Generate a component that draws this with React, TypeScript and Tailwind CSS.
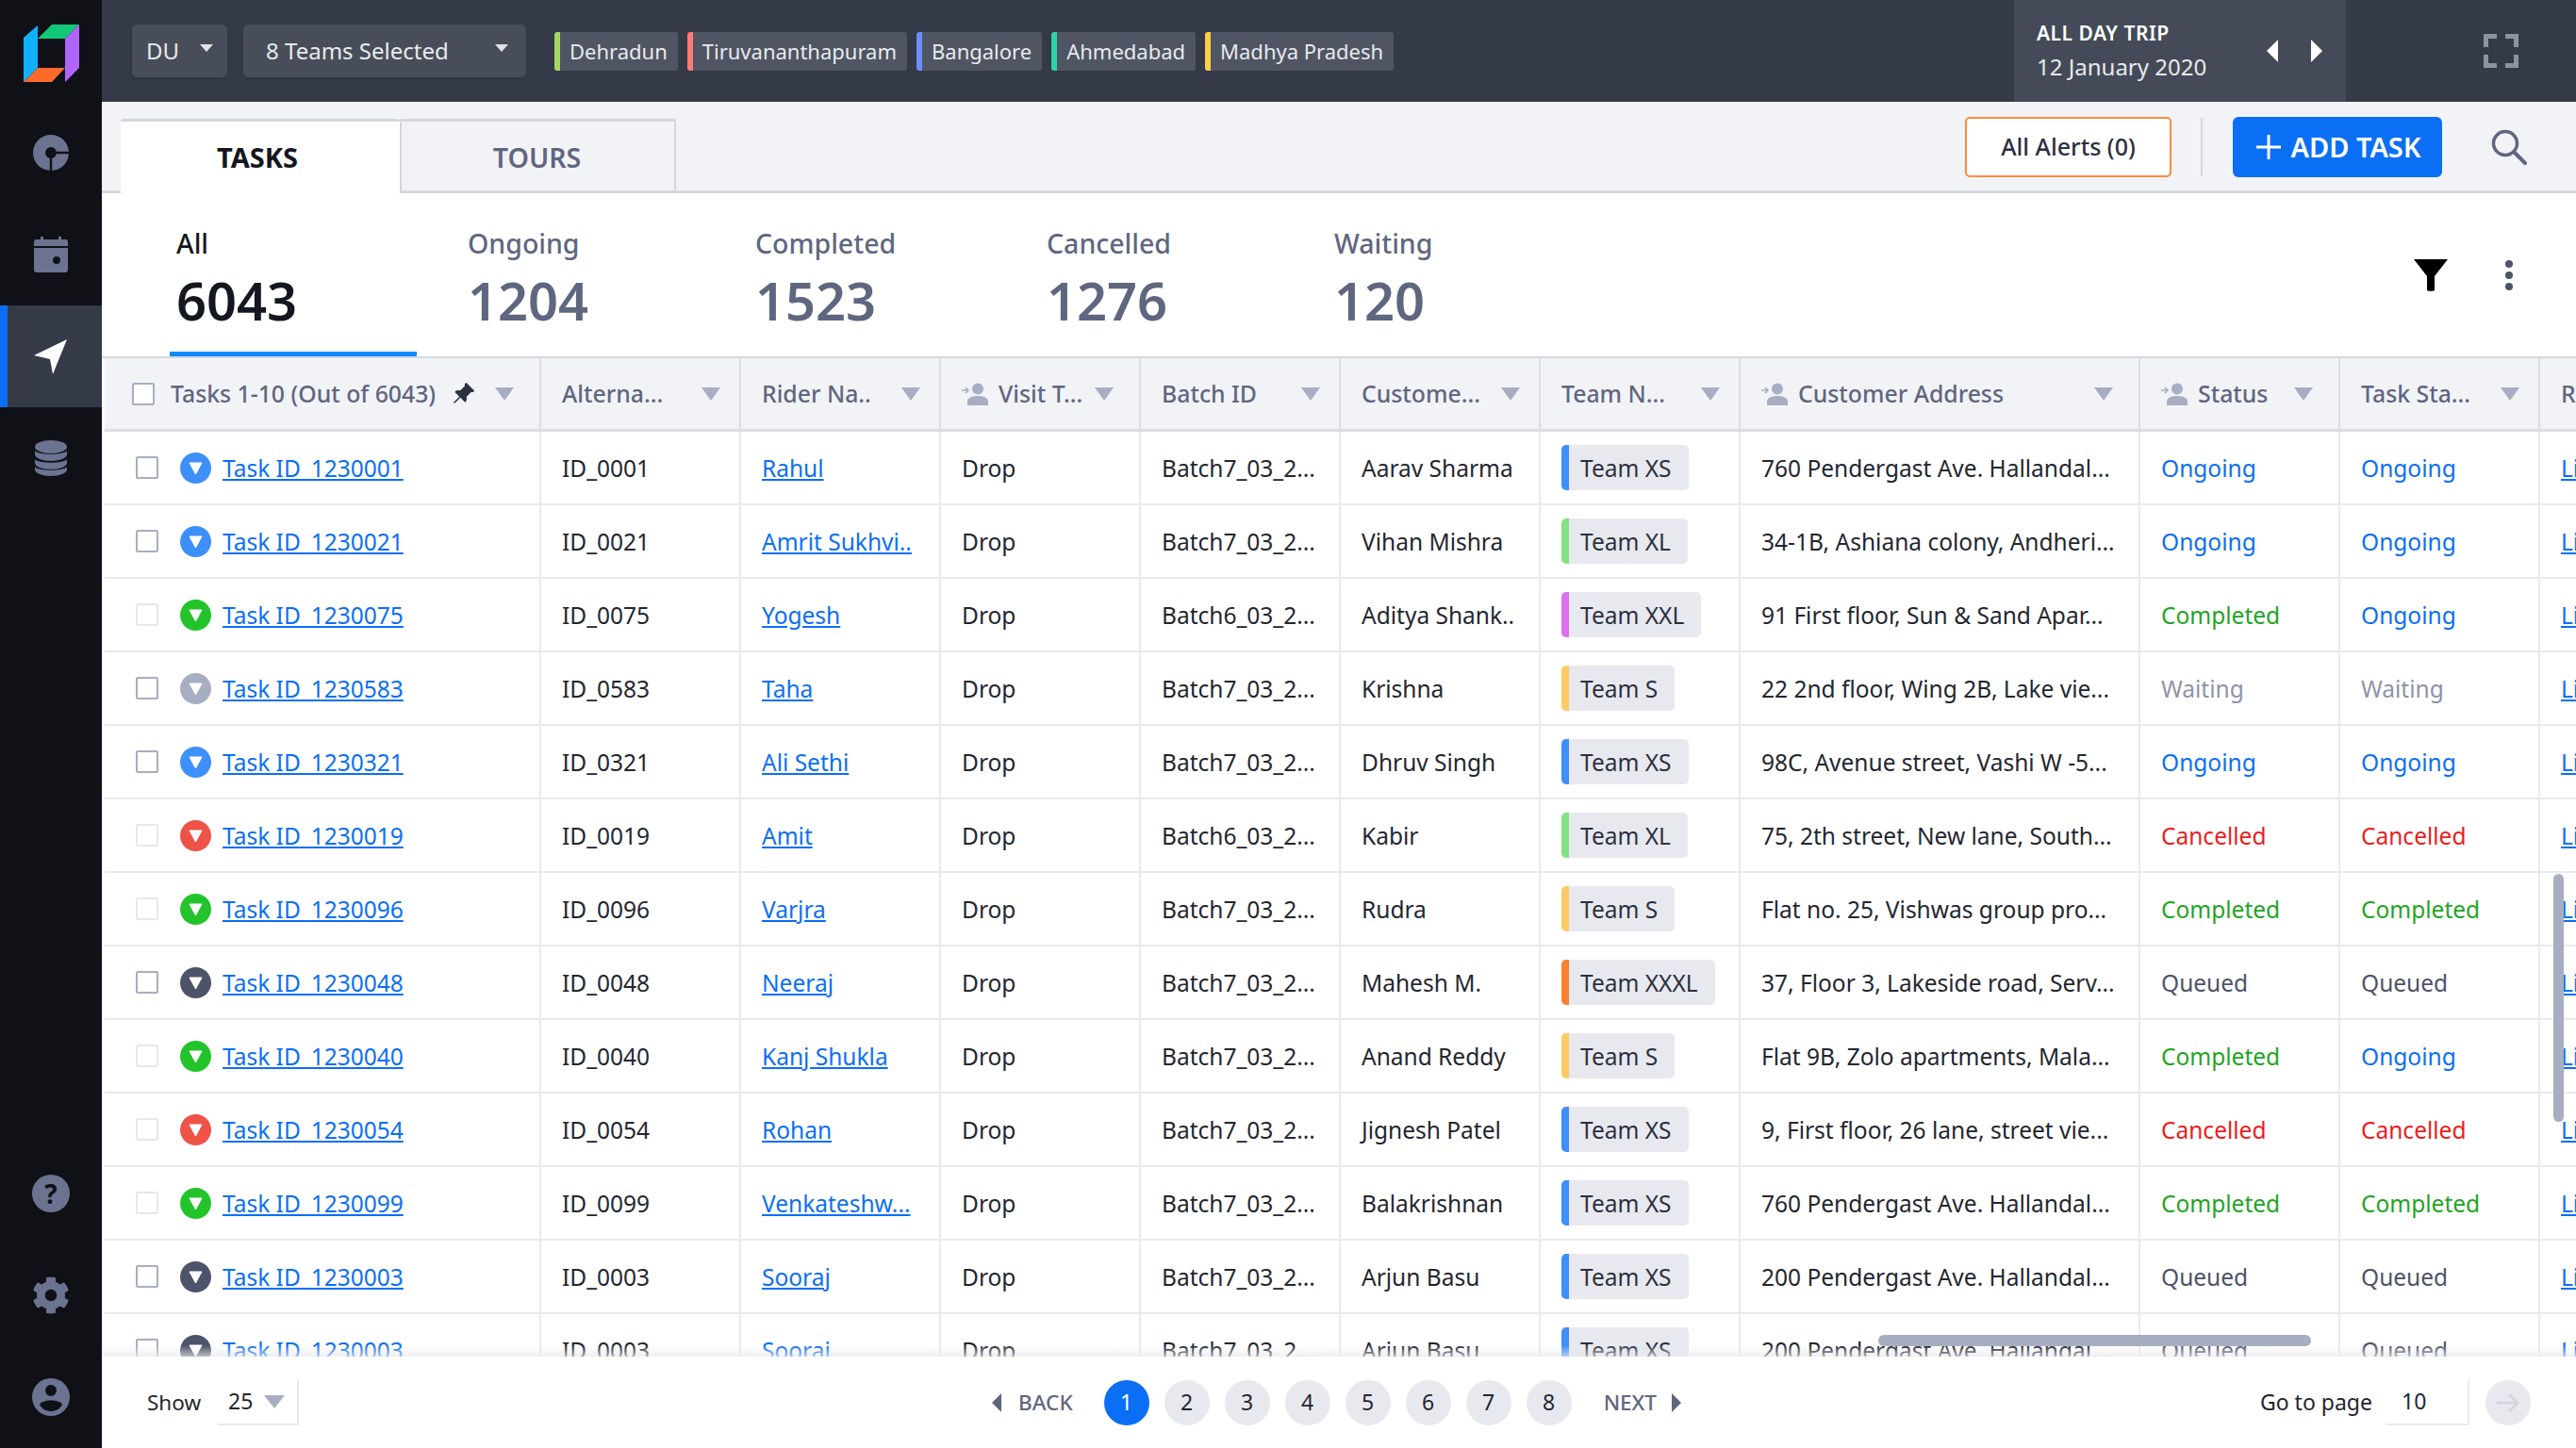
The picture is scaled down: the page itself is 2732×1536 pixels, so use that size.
import { ReactNode } from "react";
import { BsPinAngleFill } from "react-icons/bs";
import { FaCog } from "react-icons/fa";

type Team = "XS" | "XL" | "XXL" | "XXXL" | "S";
type Status = "Ongoing" | "Completed" | "Waiting" | "Cancelled" | "Queued";

interface Row {
  id: string;
  alt: string;
  rider: string;
  batch: string;
  customer: string;
  team: Team;
  address: string;
  status: Status;
  taskStatus: Status;
  faint?: boolean;
}

const rows: Row[] = [
  { id: "1230001", alt: "ID_0001", rider: "Rahul", batch: "Batch7_03_2...", customer: "Aarav Sharma", team: "XS", address: "760 Pendergast Ave. Hallandal...", status: "Ongoing", taskStatus: "Ongoing" },
  { id: "1230021", alt: "ID_0021", rider: "Amrit Sukhvi..", batch: "Batch7_03_2...", customer: "Vihan Mishra", team: "XL", address: "34-1B, Ashiana colony, Andheri...", status: "Ongoing", taskStatus: "Ongoing" },
  { id: "1230075", alt: "ID_0075", rider: "Yogesh", batch: "Batch6_03_2...", customer: "Aditya Shank..", team: "XXL", address: "91 First floor, Sun & Sand Apar...", status: "Completed", taskStatus: "Ongoing", faint: true },
  { id: "1230583", alt: "ID_0583", rider: "Taha", batch: "Batch7_03_2...", customer: "Krishna", team: "S", address: "22 2nd floor, Wing 2B, Lake vie...", status: "Waiting", taskStatus: "Waiting" },
  { id: "1230321", alt: "ID_0321", rider: "Ali Sethi", batch: "Batch7_03_2...", customer: "Dhruv Singh", team: "XS", address: "98C, Avenue street, Vashi W -5...", status: "Ongoing", taskStatus: "Ongoing" },
  { id: "1230019", alt: "ID_0019", rider: "Amit", batch: "Batch6_03_2...", customer: "Kabir", team: "XL", address: "75, 2th street, New lane, South...", status: "Cancelled", taskStatus: "Cancelled", faint: true },
  { id: "1230096", alt: "ID_0096", rider: "Varjra", batch: "Batch7_03_2...", customer: "Rudra", team: "S", address: "Flat no. 25, Vishwas group pro...", status: "Completed", taskStatus: "Completed", faint: true },
  { id: "1230048", alt: "ID_0048", rider: "Neeraj", batch: "Batch7_03_2...", customer: "Mahesh M.", team: "XXXL", address: "37, Floor 3, Lakeside road, Serv...", status: "Queued", taskStatus: "Queued" },
  { id: "1230040", alt: "ID_0040", rider: "Kanj Shukla", batch: "Batch7_03_2...", customer: "Anand Reddy", team: "S", address: "Flat 9B, Zolo apartments, Mala...", status: "Completed", taskStatus: "Ongoing", faint: true },
  { id: "1230054", alt: "ID_0054", rider: "Rohan", batch: "Batch7_03_2...", customer: "Jignesh Patel", team: "XS", address: "9, First floor, 26 lane, street vie...", status: "Cancelled", taskStatus: "Cancelled", faint: true },
  { id: "1230099", alt: "ID_0099", rider: "Venkateshw...", batch: "Batch7_03_2...", customer: "Balakrishnan", team: "XS", address: "760 Pendergast Ave. Hallandal...", status: "Completed", taskStatus: "Completed", faint: true },
  { id: "1230003", alt: "ID_0003", rider: "Sooraj", batch: "Batch7_03_2...", customer: "Arjun Basu", team: "XS", address: "200 Pendergast Ave. Hallandal...", status: "Queued", taskStatus: "Queued" },
  { id: "1230003", alt: "ID_0003", rider: "Sooraj", batch: "Batch7_03_2...", customer: "Arjun Basu", team: "XS", address: "200 Pendergast Ave. Hallandal...", status: "Queued", taskStatus: "Queued" },
];

const teamStrip: Record<Team, string> = {
  XS: "border-[#3d8ffb]",
  XL: "border-[#80e283]",
  XXL: "border-[#df6ff0]",
  XXXL: "border-[#ff7f2e]",
  S: "border-[#ffc965]",
};

const statusText: Record<Status, string> = {
  Ongoing: "text-[#0b6ff5]",
  Completed: "text-[#1fa51f]",
  Waiting: "text-[#8d93a8]",
  Cancelled: "text-[#ee1c1c]",
  Queued: "text-[#4d5368]",
};

const statusDot: Record<Status, string> = {
  Ongoing: "bg-[#3d8ffb]",
  Completed: "bg-[#22c42a]",
  Waiting: "bg-[#a8aec2]",
  Cancelled: "bg-[#ef5247]",
  Queued: "bg-[#4d5368]",
};

const cols = {
  first: "w-[463px] shrink-0",
  normal: "w-[212px] shrink-0",
  wide: "w-[424px] shrink-0",
};

const chips = [
  ["Dehradun", "border-[#a5d75f]"],
  ["Tiruvananthapuram", "border-[#ff7b73]"],
  ["Bangalore", "border-[#6f8cff]"],
  ["Ahmedabad", "border-[#2dd4a7]"],
  ["Madhya Pradesh", "border-[#ffce45]"],
];

function Caret({ className = "text-[#a8aec2]", w = 20, h = 14 }: { className?: string; w?: number; h?: number }) {
  return (
    <svg width={w} height={h} viewBox="0 0 20 14" preserveAspectRatio="none" className={`shrink-0 ${className}`}>
      <path d="M0 0H20L10 14Z" fill="currentColor" />
    </svg>
  );
}

function Side({ children, active }: { children: ReactNode; active?: boolean }) {
  return (
    <div className={`flex h-[108px] items-center justify-center ${active ? "border-l-[8px] border-[#0b6ff5] bg-[#343a48] pr-[8px]" : ""}`}>
      {children}
    </div>
  );
}

function Logo() {
  return (
    <svg width="108" height="108" viewBox="0 0 108 108">
      <path d="M25 40L40 27V72L25 87Z" fill="#12b0fb" />
      <path d="M40 41L55 26H84L69 41Z" fill="#12c878" />
      <path d="M69 41L84 26V72L69 87Z" fill="#b065ff" />
      <path d="M40 72H69L55 87H25Z" fill="#ff6a2b" />
    </svg>
  );
}

function Person() {
  return (
    <svg width="30" height="24" viewBox="0 0 30 24" className="shrink-0 text-[#a8aec2]">
      <circle cx="17" cy="6.5" r="6" fill="currentColor" />
      <path d="M6 24V20C6 16 11 14 17 14S28 16 28 20V24Z" fill="currentColor" />
      <path d="M0 8H6M4 5L7 8L4 11" stroke="currentColor" strokeWidth="1.5" fill="none" />
    </svg>
  );
}

function HeadCell({ label, col, person }: { label: string; col: string; person?: boolean }) {
  return (
    <div className={`${col} flex h-full items-center border-r-2 border-[#dcdee6] pl-[22px] ${person ? "pr-[27px]" : "pr-[20px]"}`}>
      {person ? <Person /> : null}
      <span className={`flex-1 text-[24.800px] font-medium text-[#5f6680] ${person ? "ml-[9px]" : ""}`}>{label}</span>
      <Caret />
    </div>
  );
}

function Check({ faint }: { faint?: boolean }) {
  return <span className={`block h-[24px] w-[24px] shrink-0 rounded-[2px] border-2 bg-white ${faint ? "border-[#e6e7ee]" : "border-[#a8aec2]"}`} />;
}

function Cell({ col, children }: { col: string; children: ReactNode }) {
  return <div className={`${col} flex h-full items-center overflow-hidden border-r-2 border-[#e9eaf0] pl-[22px] pt-[2px]`}>{children}</div>;
}

function TableRow({ row }: { row: Row }) {
  return (
    <div className="flex h-[78px] shrink-0 border-b-[2px] border-[#e9eaf0] text-[24.500px] text-[#23262f]">
      <div className={`${cols.first} flex h-full items-center border-r-2 border-[#e9eaf0] pl-[33px]`}>
        <Check faint={row.faint} />
        <span className={`ml-[23px] flex h-[33px] w-[33px] shrink-0 items-center justify-center rounded-full ${statusDot[row.status]}`}>
          <svg width="15" height="15" viewBox="0 0 15 15">
            <path d="M1 2H14L7.5 14Z" fill="white" stroke="white" strokeLinejoin="round" />
          </svg>
        </span>
        <a className="ml-[12px] mt-[2px] text-[#0b6ff5] underline underline-offset-2">Task ID_{row.id}</a>
      </div>
      <Cell col={cols.normal}>{row.alt}</Cell>
      <Cell col={cols.normal}>
        <a className="text-[#0b6ff5] underline underline-offset-2">{row.rider}</a>
      </Cell>
      <Cell col={cols.normal}>Drop</Cell>
      <Cell col={cols.normal}>{row.batch}</Cell>
      <Cell col={cols.normal}>{row.customer}</Cell>
      <Cell col={cols.normal}>
        <span className={`mt-[-2px] flex h-[48px] items-center rounded-[5px] border-l-[8px] bg-[#e8e9ef] pl-[12px] pr-[18px] text-[#2b3040] ${teamStrip[row.team]}`}>
          <span className="mt-[2px]">Team {row.team}</span>
        </span>
      </Cell>
      <Cell col={cols.wide}>{row.address}</Cell>
      <Cell col={cols.normal}>
        <span className={statusText[row.status]}>{row.status}</span>
      </Cell>
      <Cell col={cols.normal}>
        <span className={statusText[row.taskStatus]}>{row.taskStatus}</span>
      </Cell>
      <div className="flex h-full w-[60px] shrink-0 items-center overflow-hidden pl-[22px] pt-[2px]">
        <a className="text-[#0b6ff5] underline underline-offset-2">Link</a>
      </div>
    </div>
  );
}

function Stat({ label, value, width, active }: { label: string; value: string; width: string; active?: boolean }) {
  return (
    <div className={`${width} shrink-0`}>
      <div className={`relative w-[262px] pl-[7px] pt-[28px] ${active ? "text-[#14171f]" : "text-[#5f6680]"}`}>
        <div className="text-[28.500px] font-medium leading-[50px]">{label}</div>
        <div className="text-[56px] font-semibold leading-[70px]">{value}</div>
        {active ? <div className="absolute bottom-[-25px] left-0 h-[5px] w-[262px] bg-[#0a8cff]" /> : null}
      </div>
    </div>
  );
}

export default function App() {
  return (
    <div className="flex h-[1536px] w-[2732px] overflow-hidden bg-white font-['Noto_Sans','Open_Sans',sans-serif]">
      <aside className="flex w-[108px] shrink-0 flex-col bg-[#0f1117]">
        <Logo />
        <Side>
          <svg width="40" height="40" viewBox="0 0 40 40">
            <circle cx="20" cy="20" r="19" fill="#6b7391" />
            <circle cx="20" cy="20" r="6" fill="#0f1117" />
            <path d="M20 20H40M20 20V40" stroke="#0f1117" strokeWidth="2.5" />
          </svg>
        </Side>
        <Side>
          <svg width="36" height="38" viewBox="0 0 36 38">
            <path d="M0 35V6C0 4 1 3 3 3H7V0H10V3H26V0H29V3H33C35 3 36 4 36 6V35C36 37 35 38 33 38H3C1 38 0 37 0 35Z" fill="#6b7391" />
            <path d="M0 11H36" stroke="#0f1117" strokeWidth="2" />
            <circle cx="24" cy="25" r="4" fill="#0f1117" />
          </svg>
        </Side>
        <Side active>
          <svg width="36" height="37" viewBox="0 0 36 37">
            <path d="M35 0L0 17L17 21L20 37Z" fill="white" />
          </svg>
        </Side>
        <Side>
          <svg width="34" height="38" viewBox="0 0 34 38">
            <ellipse cx="17" cy="7" rx="17" ry="7" fill="#6b7391" />
            <path d="M0 11C3 16 31 16 34 11V15C34 19 26 22 17 22S0 19 0 15Z" fill="#6b7391" />
            <path d="M0 20C3 25 31 25 34 20V24C34 28 26 31 17 31S0 28 0 24Z" fill="#6b7391" />
            <path d="M0 28C3 33 31 33 34 28V31C34 35 26 38 17 38S0 35 0 31Z" fill="#6b7391" />
          </svg>
        </Side>
        <div className="flex-1" />
        <Side>
          <span className="flex h-[40px] w-[40px] items-center justify-center rounded-full bg-[#6b7391] text-[28px] font-bold leading-none text-[#0f1117]">?</span>
        </Side>
        <Side>
          <FaCog size={40} color="#6b7391" />
        </Side>
        <Side>
          <svg width="40" height="40" viewBox="0 0 40 40">
            <circle cx="20" cy="20" r="20" fill="#6b7391" />
            <circle cx="20" cy="13" r="6" fill="#0f1117" />
            <path d="M8 28C10 22 30 22 32 28C29 33 25 35 20 35S11 33 8 28Z" fill="#0f1117" />
          </svg>
        </Side>
      </aside>

      <main className="flex min-w-0 flex-1 flex-col">
        <header className="flex h-[108px] shrink-0 items-center bg-[#343a48] pl-[32px] text-[24px] text-[#e8eaee]">
          <div className="flex h-[56px] w-[101px] items-center justify-between rounded-[5px] bg-[#484e59] pl-[15px] pr-[15px] shadow-sm">
            DU <Caret className="mb-[6px] text-[#dfe1e6]" w={14} h={8} />
          </div>
          <div className="ml-[17px] flex h-[56px] w-[300px] items-center justify-between rounded-[5px] bg-[#484e59] pl-[24px] pr-[19px] shadow-sm">
            8 Teams Selected <Caret className="mb-[6px] text-[#dfe1e6]" w={14} h={8} />
          </div>
          <div className="ml-[30px] flex gap-[10px]">
            {chips.map(([name, strip]) => (
              <span key={name} className={`flex h-[41px] items-center rounded-[3px] border-l-[6px] bg-[#4f5562] pl-[10px] pr-[11px] text-[22px] ${strip}`}>
                {name}
              </span>
            ))}
          </div>
          <div className="flex-1" />
          <div className="flex h-full w-[352px] items-center bg-[#444a57] pl-[24px]">
            <div className="flex-1">
              <div className="text-[21px] font-semibold leading-[30px] tracking-[0.5px] text-white">ALL DAY TRIP</div>
              <div className="mt-[4px] text-[24px] leading-[34px]">12 January 2020</div>
            </div>
            <svg width="12" height="24" viewBox="0 0 12 24" className="mr-[35px]"><path d="M12 0V24L0 12Z" fill="white" /></svg>
            <svg width="12" height="24" viewBox="0 0 12 24" className="mr-[25px]"><path d="M0 0V24L12 12Z" fill="white" /></svg>
          </div>
          <div className="flex w-[244px] justify-center pl-[84px]">
            <svg width="37" height="36" viewBox="0 0 37 36">
              <path d="M2.5 14V2.500H14M23 2.500H34.500V14M34.500 22V33.500H23M14 33.500H2.500V22" stroke="#8e93a0" strokeWidth="5" fill="none" />
            </svg>
          </div>
        </header>

        <div className="flex h-[97px] shrink-0 items-end border-b-[3px] border-[#d5d7df] bg-[#f2f3f7] pl-[20px]">
          <div className="z-10 mb-[-3px] flex h-[79px] w-[296px] items-center justify-center rounded-t-[3px] border-t-[3px] border-[#d5d7df] bg-white pr-[6px] text-[29px] font-bold text-[#14171f]">
            TASKS
          </div>
          <div className="flex h-[76px] w-[293px] items-center justify-center rounded-t-[3px] border-x-[2px] border-t-[3px] border-[#d5d7df] pr-[2px] pt-[3px] text-[28.500px] font-semibold text-[#5f6680]">
            TOURS
          </div>
          <div className="mb-[14px] ml-auto flex items-center pr-[52px]">
            <button className="flex h-[64px] w-[219px] items-center justify-center rounded-[5px] border-2 border-[#ff8a3d] bg-white text-[25px] font-medium text-[#2b3040]">
              All Alerts (0)
            </button>
            <div className="ml-[31px] mr-[32px] h-[62px] w-[2px] bg-[#d5d7df]" />
            <button className="flex h-[64px] w-[222px] items-center justify-center gap-[10px] rounded-[6px] bg-[#0b6ff5] pl-[3px] text-[29px] font-semibold text-white">
              <svg width="26" height="26" viewBox="0 0 26 26"><path d="M13 0V26M0 13H26" stroke="white" strokeWidth="3" /></svg>
              ADD TASK
            </button>
            <svg width="38" height="38" viewBox="0 0 38 38" className="ml-[52px]">
              <circle cx="15" cy="15" r="12.500" stroke="#5f6680" strokeWidth="3.500" fill="none" />
              <path d="M24 24L36 36" stroke="#5f6680" strokeWidth="4" strokeLinecap="round" />
            </svg>
          </div>
        </div>

        <div className="flex h-[173px] shrink-0 items-start pl-[72px]">
          <Stat label="All" value="6043" width="w-[309px]" active />
          <Stat label="Ongoing" value="1204" width="w-[305px]" />
          <Stat label="Completed" value="1523" width="w-[309px]" />
          <Stat label="Cancelled" value="1276" width="w-[305px]" />
          <Stat label="Waiting" value="120" width="w-[262px]" />
          <div className="ml-auto flex items-center pr-[67px] pt-[70px]">
            <svg width="36" height="34" viewBox="0 0 36 34"><path d="M0 0H36L22 18V33C22 34 14 34 14 33V18Z" fill="black" /></svg>
            <svg width="8" height="34" viewBox="0 0 8 34" className="ml-[61px]">
              <circle cx="4" cy="5" r="4" fill="#4d5368" />
              <circle cx="4" cy="17" r="4" fill="#4d5368" />
              <circle cx="4" cy="29" r="4" fill="#4d5368" />
            </svg>
          </div>
        </div>

        <div className="relative min-h-0 flex-1 overflow-hidden border-t-[2px] border-[#d5d7df] pl-[3px]">
          <div className="flex h-[78px] w-[2660px] border-b-[3px] border-[#dcdee6] bg-[#f2f3f7]">
            <div className={`${cols.first} flex h-full items-center border-r-2 border-[#dcdee6] pl-[29px] pr-[27px]`}>
              <Check />
              <span className="ml-[17px] flex-1 text-[24.800px] font-medium text-[#5f6680]">Tasks 1-10 (Out of 6043)</span>
              <BsPinAngleFill size={25} color="#2b3040" className="mr-[21px]" />
              <Caret />
            </div>
            <HeadCell label="Alterna..." col={cols.normal} />
            <HeadCell label="Rider Na.." col={cols.normal} />
            <HeadCell label="Visit T..." col={cols.normal} person />
            <HeadCell label="Batch ID" col={cols.normal} />
            <HeadCell label="Custome..." col={cols.normal} />
            <HeadCell label="Team N..." col={cols.normal} />
            <HeadCell label="Customer Address" col={cols.wide} person />
            <HeadCell label="Status" col={cols.normal} person />
            <HeadCell label="Task Sta..." col={cols.normal} />
            <div className="flex w-[60px] shrink-0 items-center overflow-hidden pl-[22px] text-[24.800px] font-medium text-[#5f6680]">R</div>
          </div>
          {rows.map((row, i) => (
            <TableRow key={i} row={row} />
          ))}
          <div className="absolute bottom-0 left-0 right-0 h-[12px] bg-gradient-to-b from-transparent to-[#e8e9ee]/70" />
          <div className="absolute left-[1884px] top-[1036px] h-[12px] w-[459px] rounded-full bg-[#a8aec2]" />
          <div className="absolute left-[2600px] top-[547px] h-[263px] w-[11px] rounded-full bg-[#a8aec2]" />
        </div>

        <footer className="flex h-[97px] shrink-0 items-center pl-[48px] pr-[48px] text-[23px] text-[#23262f]">
          <span className="text-[22.500px]">Show</span>
          <div className="ml-[18px] flex h-[48px] w-[86px] items-center gap-[12px] border-b-2 border-r-2 border-[#e8e9ef] pl-[11px]">
            25 <Caret w={22} h={14} />
          </div>
          <div className="ml-[735px] flex items-center text-[#5f6680]">
            <svg width="10" height="20" viewBox="0 0 10 20" className="mr-[18px]"><path d="M10 0V20L0 10Z" fill="#5f6680" /></svg>
            <span className="text-[22.500px] font-medium">BACK</span>
            <div className="ml-[33px] flex gap-[16px]">
              {[1, 2, 3, 4, 5, 6, 7, 8].map((n) => (
                <span key={n} className={`flex h-[48px] w-[48px] items-center justify-center rounded-full ${n === 1 ? "bg-[#0b6ff5] text-white" : "bg-[#e8e9ef] text-[#23262f]"}`}>
                  {n}
                </span>
              ))}
            </div>
            <span className="ml-[34px] text-[22.500px] font-medium">NEXT</span>
            <svg width="10" height="20" viewBox="0 0 10 20" className="ml-[16px]"><path d="M0 0V20L10 10Z" fill="#5f6680" /></svg>
          </div>
          <div className="ml-auto flex items-center">
            <span>Go to page</span>
            <div className="ml-[15px] flex h-[48px] w-[88px] items-center border-b-2 border-r-2 border-[#e8e9ef] pl-[16px]">10</div>
            <span className="ml-[17px] flex h-[48px] w-[48px] items-center justify-center rounded-full bg-[#e8e9ef]">
              <svg width="24" height="22" viewBox="0 0 24 22"><path d="M0 11H22M13 2L22 11L13 20" stroke="#d3d5de" strokeWidth="2.500" fill="none" /></svg>
            </span>
          </div>
        </footer>
      </main>
    </div>
  );
}
